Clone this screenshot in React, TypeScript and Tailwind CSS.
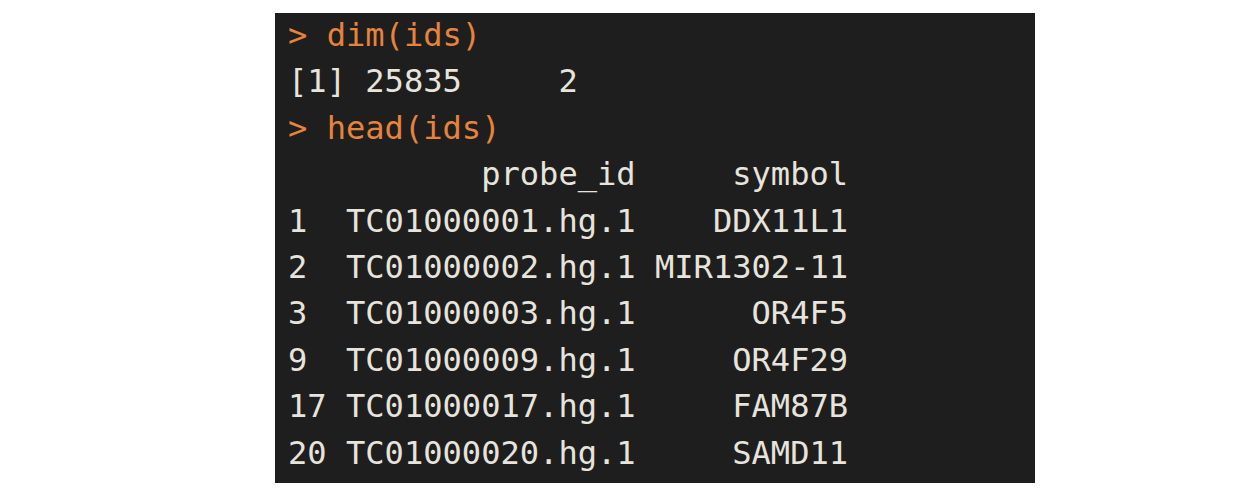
const lines: { text: string; prompt?: boolean }[] = [
  { text: "> dim(ids)", prompt: true },
  { text: "[1] 25835     2" },
  { text: "> head(ids)", prompt: true },
  { text: "          probe_id     symbol" },
  { text: "1  TC01000001.hg.1    DDX11L1" },
  { text: "2  TC01000002.hg.1 MIR1302-11" },
  { text: "3  TC01000003.hg.1      OR4F5" },
  { text: "9  TC01000009.hg.1     OR4F29" },
  { text: "17 TC01000017.hg.1     FAM87B" },
  { text: "20 TC01000020.hg.1     SAMD11" },
];

export default function App() {
  return (
    <div className="w-[1234px] h-[500px] bg-white pt-[13px] pl-[275px]">
      <div className="w-[760px] h-[470px] bg-[#1e1e1e] overflow-hidden pl-[13px] font-['DejaVu_Sans_Mono',monospace] text-[32.1px] leading-[46.4px]">
        <div className="-mt-[1px]">
          {lines.map((l, i) => (
            <div
              key={i}
              className={
                "whitespace-pre " +
                (l.prompt ? "text-[#e6833c]" : "text-[#e6e4dc]")
              }
            >
              {l.text}
            </div>
          ))}
        </div>
      </div>
    </div>
  );
}
